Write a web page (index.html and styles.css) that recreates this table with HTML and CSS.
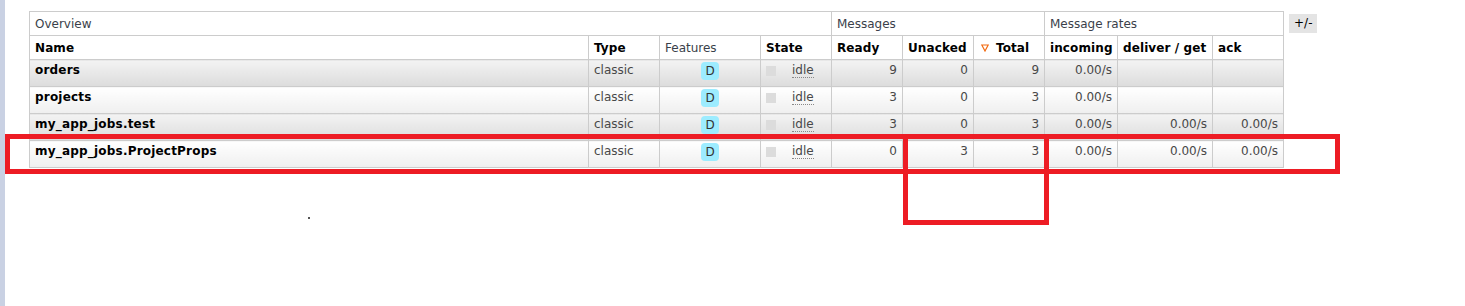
FILE: index.html
```html
<!DOCTYPE html>
<html>
<head>
<meta charset="utf-8">
<link rel="stylesheet" href="styles.css">
</head>
<body>
<div class="page">
  <table class="list">
    <colgroup>
      <col class="c-name"><col class="c71"><col class="c-feat"><col class="c71"><col class="c71"><col class="c71"><col class="c71"><col class="c-inc"><col class="c-del"><col class="c71">
    </colgroup>
    <thead>
      <tr class="group">
        <th colspan="4">Overview</th>
        <th colspan="3">Messages</th>
        <th colspan="3">Message rates</th>
      </tr>
      <tr class="cols">
        <th>Name</th>
        <th>Type</th>
        <th class="plain">Features</th>
        <th>State</th>
        <th>Ready</th>
        <th>Unacked</th>
        <th><svg class="sort" width="8" height="8" viewBox="0 0 8 8"><polygon points="0.8,1 7.2,1 4,7" fill="none" stroke="#f26a10" stroke-width="1.2"/></svg>Total</th>
        <th>incoming</th>
        <th>deliver / get</th>
        <th>ack</th>
      </tr>
    </thead>
    <tbody>
      <tr class="alt1">
        <td class="name">orders</td>
        <td>classic</td>
        <td class="feat"><abbr class="badge">D</abbr></td>
        <td><span class="state"><span class="sq"></span><abbr class="idle">idle</abbr></span></td>
        <td class="r">9</td>
        <td class="r">0</td>
        <td class="r">9</td>
        <td class="r">0.00/s</td>
        <td class="r"></td>
        <td class="r"></td>
      </tr>
      <tr class="alt2">
        <td class="name">projects</td>
        <td>classic</td>
        <td class="feat"><abbr class="badge">D</abbr></td>
        <td><span class="state"><span class="sq"></span><abbr class="idle">idle</abbr></span></td>
        <td class="r">3</td>
        <td class="r">0</td>
        <td class="r">3</td>
        <td class="r">0.00/s</td>
        <td class="r"></td>
        <td class="r"></td>
      </tr>
      <tr class="alt1">
        <td class="name">my_app_jobs.test</td>
        <td>classic</td>
        <td class="feat"><abbr class="badge">D</abbr></td>
        <td><span class="state"><span class="sq"></span><abbr class="idle">idle</abbr></span></td>
        <td class="r">3</td>
        <td class="r">0</td>
        <td class="r">3</td>
        <td class="r">0.00/s</td>
        <td class="r">0.00/s</td>
        <td class="r">0.00/s</td>
      </tr>
      <tr class="alt2">
        <td class="name">my_app_jobs.ProjectProps</td>
        <td>classic</td>
        <td class="feat"><abbr class="badge">D</abbr></td>
        <td><span class="state"><span class="sq"></span><abbr class="idle">idle</abbr></span></td>
        <td class="r">0</td>
        <td class="r">3</td>
        <td class="r">3</td>
        <td class="r">0.00/s</td>
        <td class="r">0.00/s</td>
        <td class="r">0.00/s</td>
      </tr>
    </tbody>
  </table>
  <span class="toggle">+/-</span>
  <div class="mark mark-row"></div>
  <div class="mark mark-col"></div>
  <div class="dot"></div>
</div>
</body>
</html>
```
FILE: styles.css
```css
html, body {
  margin: 0;
  padding: 0;
  background: #fff;
}
body {
  font-family: "DejaVu Sans", Verdana, sans-serif;
  font-size: 12px;
  color: #484848;
}
.page {
  position: relative;
  box-sizing: border-box;
  min-height: 306px;
  border-left: 5px solid #c9d1e3;
  padding: 11px 0 0 24px;
  display: flex;
  align-items: flex-start;
  gap: 5px;
}
.list {
  border-collapse: collapse;
  table-layout: fixed;
  width: 1255px;
}
.c-name { width: 559px; }
.c71 { width: 71px; }
.c-feat { width: 101px; }
.c-inc { width: 73px; }
.c-del { width: 95px; }
.list th, .list td {
  border: 1px solid #ccc;
  padding: 3px 5px 4px;
  line-height: 15px;
  text-align: left;
  vertical-align: top;
  white-space: nowrap;
  overflow: hidden;
}
.list th {
  padding: 5px 5px 3px;
  background: #fff;
  color: #000;
  font-weight: bold;
  letter-spacing: 0.1px;
}
.list tr.group th, .list th.plain {
  font-weight: normal;
  color: #3a3f4a;
  letter-spacing: 0;
}
.sort {
  display: inline-block;
  vertical-align: 0;
  margin: 0 7px 0 2px;
}
.list td.r { text-align: right; }
.list td.name {
  font-weight: bold;
  color: #000;
  letter-spacing: 0.2px;
}
.list td.feat {
  text-align: center;
  padding: 2px 5px 6px;
}
.badge {
  display: inline-block;
  background: #9decff;
  color: #333;
  border-radius: 4px;
  padding: 2px 4px;
  line-height: 14px;
  text-decoration: none;
  min-width: 10px;
}
.alt1 td {
  background: linear-gradient(#f3f3f3, #dcdcdc);
}
.alt2 td {
  background: linear-gradient(#ffffff, #efefef);
}
.state {
  display: inline-flex;
  align-items: center;
}
.sq {
  display: inline-block;
  width: 10px;
  height: 10px;
  background: #dcdcdc;
  margin: 1px 16px 0 0;
}
.idle {
  text-decoration: none;
  border-bottom: 1px dotted #888;
  line-height: 14px;
}
.toggle {
  margin-top: 3px;
  background: #e4e4e4;
  color: #000;
  padding: 2px 5px;
  line-height: 15px;
}
.mark {
  position: absolute;
  box-sizing: border-box;
  border: 5px solid #ed1c24;
}
.mark-row {
  left: 0;
  top: 134px;
  width: 1335px;
  height: 40px;
}
.mark-col {
  left: 898px;
  top: 134px;
  width: 146px;
  height: 91px;
}
.dot {
  position: absolute;
  left: 303px;
  top: 217px;
  width: 2px;
  height: 2px;
  background: #555;
}
```
